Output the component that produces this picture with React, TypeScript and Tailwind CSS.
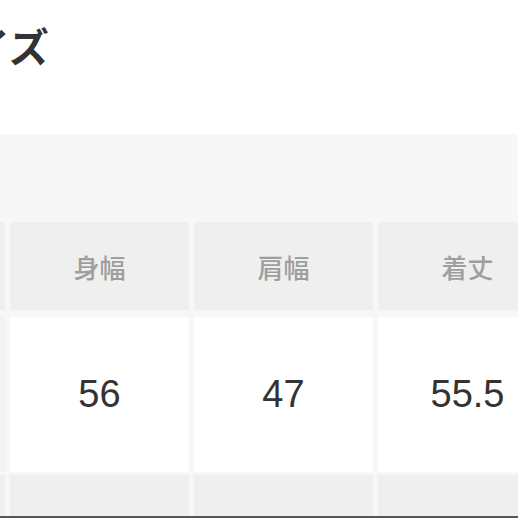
import React from 'react';

const cols = [
  { label: '身幅', value: '56' },
  { label: '肩幅', value: '47' },
  { label: '着丈', value: '55.5' },
];

export default function App() {
  return (
    <div className="w-[518px] h-[518px] overflow-hidden bg-white flex flex-col" style={{ fontFamily: '"Noto Sans CJK JP", "Liberation Sans", sans-serif' }}>
      {/* Title, scrolled so the first glyph sits off the left edge */}
      <div className="h-[134px] shrink-0 pt-[21px]">
        <h2 className="ml-[-70px] text-[40px] leading-[48px] font-bold text-[#333] whitespace-nowrap">サイズ</h2>
      </div>

      {/* Section band */}
      <div className="h-[86px] shrink-0 bg-[#f7f7f7]" />

      {/* Size table */}
      <div className="flex-1 bg-[#f7f7f7] pt-[2px] overflow-hidden">
        <div className="grid grid-cols-[5px_179px_179px_179px] gap-x-[5px] w-max">
          <div className="h-[88px] bg-[#efefef]" />
          {cols.map((c) => (
            <div key={c.label} className="h-[88px] bg-[#efefef] flex items-center justify-center text-[26px] font-medium text-[#9e9e9e]">
              {c.label}
            </div>
          ))}
        </div>
        <div className="grid grid-cols-[5px_179px_179px_179px] gap-x-[5px] w-max mt-[7px]">
          <div className="h-[155px] bg-[#f3f3f3]" />
          {cols.map((c) => (
            <div key={c.label} className="h-[155px] bg-white flex items-center justify-center text-[38px] text-[#333]" style={{ fontFamily: '"Liberation Sans", Arial, sans-serif' }}>
              {c.value}
            </div>
          ))}
        </div>
        <div className="grid grid-cols-[5px_179px_179px_179px] gap-x-[5px] w-max mt-[3px]">
          <div className="h-[41px] bg-[#efefef]" />
          {cols.map((c) => (
            <div key={c.label} className="h-[41px] bg-[#efefef]" />
          ))}
        </div>
      </div>
      <div className="h-[2px] shrink-0 bg-[#555]" />
    </div>
  );
}
